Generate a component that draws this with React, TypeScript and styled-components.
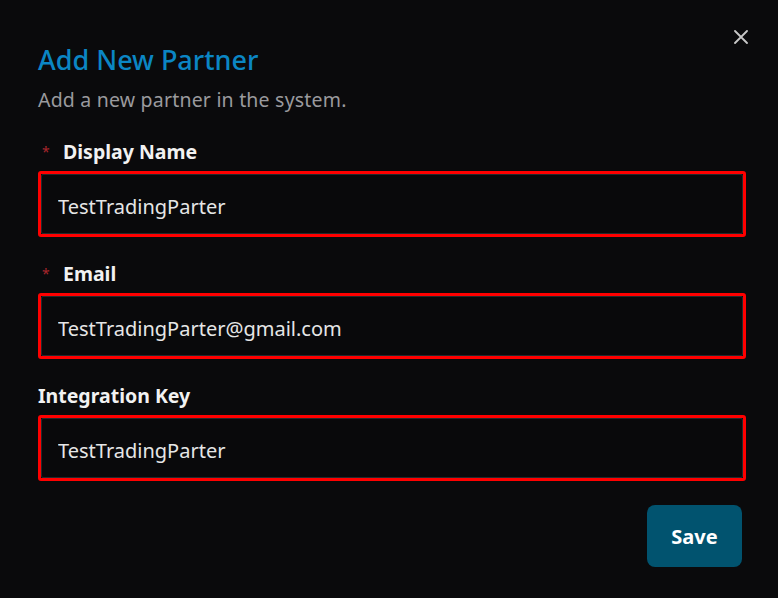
import styled, { createGlobalStyle } from "styled-components";

const GlobalStyle = createGlobalStyle`
  html, body {
    margin: 0;
    padding: 0;
    background: #0a0a0c;
  }
  body {
    font-family: "Noto Sans", "Open Sans", sans-serif;
  }
`;

const Dialog = styled.div`
  position: relative;
  width: 778px;
  height: 598px;
  box-sizing: border-box;
  padding: 42px 32px 0 38px;
  background: #0a0a0c;
  display: flex;
  flex-direction: column;
`;

const Close = styled.button`
  position: absolute;
  top: 29px;
  right: 29px;
  width: 16px;
  height: 16px;
  padding: 0;
  border: none;
  background: transparent;
  display: flex;
  align-items: center;
  justify-content: center;
`;

const Title = styled.h1`
  margin: 0;
  font-size: 27px;
  line-height: 36px;
  font-weight: 500;
  color: #0b86c4;
`;

const Subtitle = styled.p`
  margin: 9px 0 0;
  font-size: 19.5px;
  line-height: 26px;
  color: #9a9a9e;
  letter-spacing: 0.2px;
`;

const Form = styled.div`
  margin-top: 25px;
  display: flex;
  flex-direction: column;
  gap: 23px;
`;

const Field = styled.div`
  display: flex;
  flex-direction: column;
  gap: 6px;
`;

const Label = styled.label`
  display: flex;
  align-items: center;
  font-size: 19.5px;
  line-height: 27px;
  font-weight: 700;
  color: #f2f2f2;
`;

const Required = styled.span`
  color: #a8262c;
  font-size: 14px;
  font-weight: 400;
  width: 25px;
  padding-left: 4px;
  box-sizing: border-box;
`;

const Highlight = styled.div`
  border: 3px solid #ff0000;
  border-radius: 3px;
`;

const Input = styled.input`
  display: block;
  width: 100%;
  box-sizing: border-box;
  height: 60px;
  padding: 5px 16px 0;
  border: 1px solid #23292d;
  border-radius: 2px;
  background: #09090b;
  color: #e6e6e6;
  font-family: inherit;
  font-size: 20px;
  outline: none;
`;

const Footer = styled.div`
  margin-top: 24px;
  display: flex;
  justify-content: flex-end;
  padding-right: 4px;
`;

const SaveButton = styled.button`
  width: 95px;
  height: 62px;
  border: none;
  border-radius: 8px;
  background: #01536f;
  color: #ffffff;
  font-family: inherit;
  font-size: 20px;
  font-weight: 700;
`;

const fields = [
  { label: "Display Name", value: "TestTradingParter", required: true },
  { label: "Email", value: "TestTradingParter@gmail.com", required: true },
  { label: "Integration Key", value: "TestTradingParter", required: false },
];

function App() {
  return (
    <>
      <GlobalStyle />
      <Dialog>
        <Close aria-label="Close">
          <svg width="14" height="14" viewBox="0 0 14 14">
            <path d="M1 1L13 13M13 1L1 13" stroke="#c8c8c8" strokeWidth="1.8" strokeLinecap="round" />
          </svg>
        </Close>
        <Title>Add New Partner</Title>
        <Subtitle>Add a new partner in the system.</Subtitle>
        <Form>
          {fields.map((f) => (
            <Field key={f.label}>
              <Label>
                {f.required && <Required>*</Required>}
                {f.label}
              </Label>
              <Highlight>
                <Input defaultValue={f.value} />
              </Highlight>
            </Field>
          ))}
        </Form>
        <Footer>
          <SaveButton>Save</SaveButton>
        </Footer>
      </Dialog>
    </>
  );
}

export default App;
